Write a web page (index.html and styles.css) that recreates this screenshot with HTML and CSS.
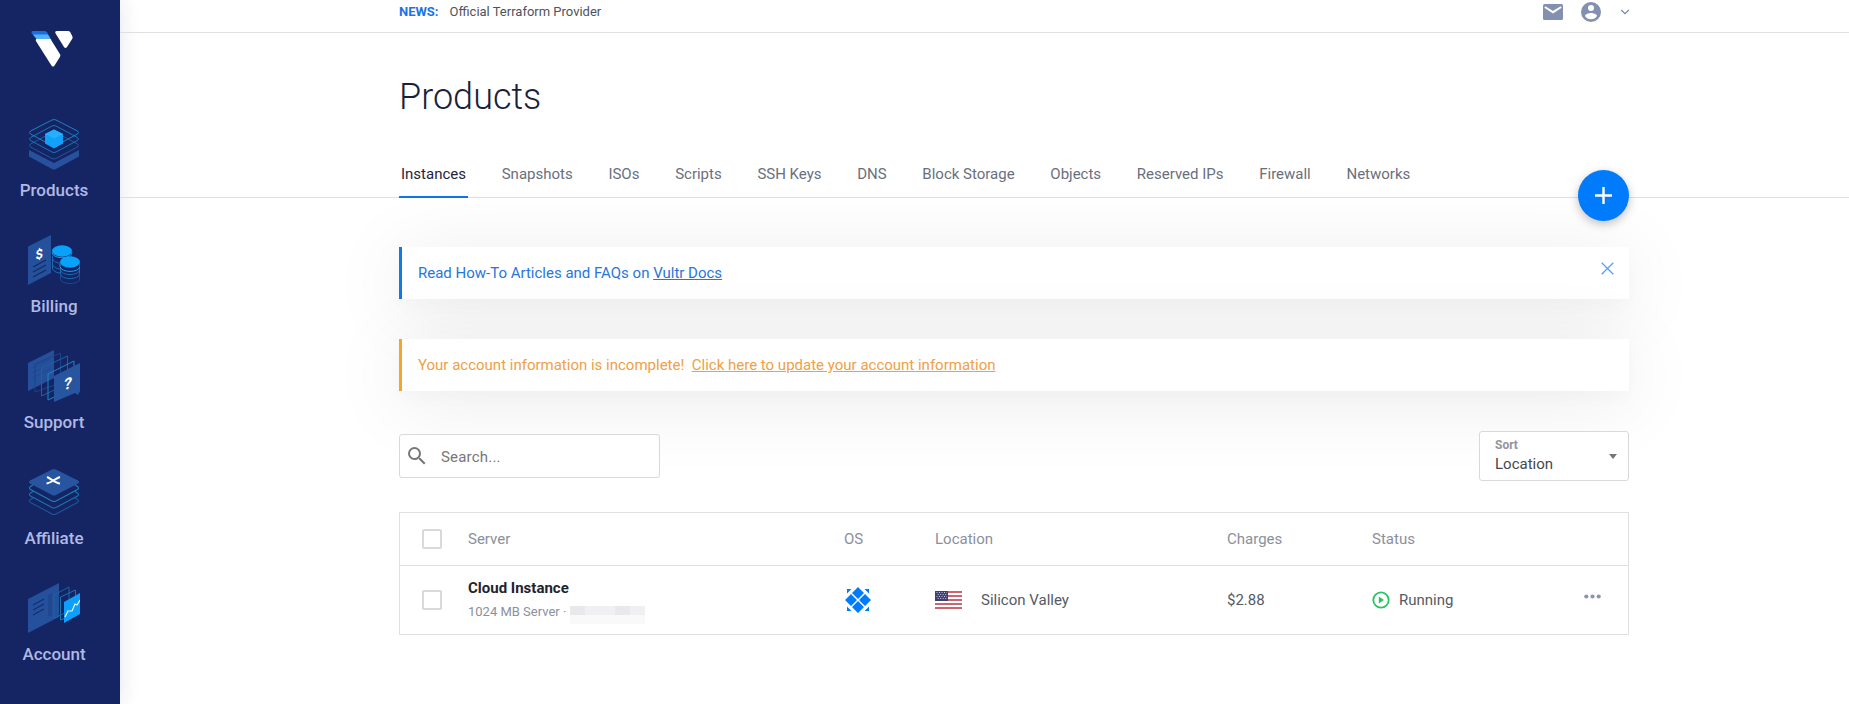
FILE: index.html
```html
<!DOCTYPE html>
<html lang="en">
<head>
<meta charset="utf-8">
<title>Products</title>
<link rel="stylesheet" href="styles.css">
</head>
<body>
<div class="app">
  <aside class="sidebar">
    <svg class="logo" viewBox="0 0 44 38" width="44" height="38">
      <path d="M3 1h11.500q1.500 0 2.400 1.300L19.600 7H4.400L1.500 3Q1 1 3 1z" fill="#1a6fe0"/>
      <path d="M3.300 4.500H18l3.300 5.500H7z" fill="#51b1fb"/>
      <path d="M6.300 9H20.500L30 24.300q.7 1.200 0 2.400L24.400 35.700q-1.400 1.800-2.800 0L5.900 11Q5.500 9.500 6.300 9z" fill="#fff"/>
      <path d="M26.800 1H38q1.500 0 2.300 1.300l2 4q.7 1.200 0 2.400L37 17q-1.500 1.800-3 0L25.600 3.500Q24.500 1.200 26.800 1z" fill="#fff"/>
    </svg>
    <nav class="menu">
      <a class="menu-item">
        <svg viewBox="0 0 52 52" width="52" height="52">
          <path d="M1 32L26 45 51 32v6.500L28 51q-2 1-4 0L1 38.500z" fill="#27509d"/>
          <g fill="none" stroke="#1876b8" stroke-width="1">
            <path d="M24 14.500L2.500 26q-2 1.500 0 3L24 40.500q2 1 4 0L49.500 29q2-1.500 0-3L28 14.500q-2-1-4 0z" stroke="#1d5a9f"/>
            <path d="M24 8L2.500 19.500q-2 1.500 0 3L24 34q2 1 4 0l21.500-11.500q2-1.500 0-3L28 8q-2-1-4 0z"/>
            <path d="M24 2L2.500 13q-2 1.500 0 3L24 27.500q2 1 4 0L49.500 16q2-1.500 0-3L28 2q-2-1-4 0z" stroke="#1b83c2"/>
          </g>
          <path d="M26 11.500l9 4.500v9.500l-9 5-9-5V16z" fill="#12a0fb"/>
          <path d="M26 11.500l9 4.500-9 4.500L17 16z" fill="#25b0ff"/>
        </svg>
        <span>Products</span>
      </a>
      <a class="menu-item">
        <svg viewBox="0 0 52 52" width="52" height="52">
          <path d="M0 12.500L23 1v38L0 51z" fill="#24509c"/>
          <path d="M5 33l13-7M5 38l13-7M5 43l13-7" stroke="#142963" stroke-width="1.200"/>
          <text class="iso-mark" transform="matrix(1 -.35 0 1 7.500 26)">$</text>
          <g fill="none" stroke="#176cb3">
            <path d="M24.500 19v5c0 7 19 7 19 0v-5M24.500 25v6c2 3 5 4 8 4M24.500 30v5c2 3 5 4 8 4"/>
            <path d="M32.500 30v10c0 6 19 6 19 0V30M32.500 36c0 6 19 6 19 0"/>
            <path d="M32.500 40v5c0 6 19 6 19 0v-5" stroke="#1b4a90"/>
          </g>
          <path d="M24 17v3.500c2 7 18 7 20 0V17z" fill="#152463"/>
          <path d="M24 18.500c1 7 19 7 20 0" fill="none" stroke="#169bed"/>
          <ellipse cx="34" cy="17" rx="10" ry="5.800" fill="#08a2fb"/>
          <path d="M32 28v4.500c2 6.500 18 6.500 20 0V28z" fill="#152463"/>
          <path d="M32 29.500v3c1 6.500 19 6.500 20 0v-3" fill="none" stroke="#1a9ff0"/>
          <ellipse cx="42" cy="28" rx="10" ry="5.800" fill="#08a2fb"/>
        </svg>
        <span>Billing</span>
      </a>
      <a class="menu-item">
        <svg viewBox="0 0 52 52" width="52" height="52">
          <path d="M0 13L26 0v28L0 41z" fill="#24509c"/>
          <path d="M4 18l18-9M4 23l18-9M4 28l18-9" stroke="#20498f"/>
          <g fill="none">
            <path d="M7 14L32.500 3v30L7 42z" stroke="#1b438c"/>
            <path d="M13.500 18L39.500 6v28l-26 12z" stroke="#1b62a4"/>
            <path d="M20 24l26-13v27L20 50z" stroke="#1a86c4"/>
          </g>
          <path d="M26 26l26-13v28l-2 4-3-2L26 52z" fill="#28559f"/>
          <text class="iso-mark iso-mark--large" transform="matrix(1 -.35 -.1 1 35.500 40.500)">?</text>
        </svg>
        <span>Support</span>
      </a>
      <a class="menu-item">
        <svg viewBox="0 0 52 52" width="52" height="52">
          <g fill="none" stroke-width="1.100">
            <path d="M5 32l-2.500 1.500q-2 1.500 0 3L24 48q2 1 4 0l21.500-11.500q2-1.500 0-3L47 32" stroke="#1c5799"/>
            <path d="M5 25.500L2.500 27q-2 1.500 0 3L24 41.500q2 1 4 0L49.500 30q2-1.500 0-3L47 25.500" stroke="#1a73ae"/>
            <path d="M5 19l-2.500 1.500q-2 1.500 0 3L24 35q2 1 4 0l21.500-11.500q2-1.500 0-3L47 19" stroke="#1b83ba"/>
          </g>
          <path d="M24 3.500L2 14.500q-2 1.500 0 3L24 29q2 1 4 0l22-11.500q2-1.500 0-3L28 3.500q-2-1-4 0z" fill="#28559f"/>
          <path d="M19 11c3 1 8 6 13 6.500M32 11c-4 1-9 6-13.500 6.500" fill="none" stroke="#fff" stroke-width="2"/>
        </svg>
        <span>Affiliate</span>
      </a>
      <a class="menu-item">
        <svg viewBox="0 0 52 52" width="52" height="52">
          <path d="M0 17L31 1v34L0 51z" fill="#24509c"/>
          <path d="M5 23l11-6M5 28l11-6M5 33l11-6" stroke="#152e72" stroke-width="1.200"/>
          <path d="M20 13l4-2v22l-4 2z" fill="#1f488f"/>
          <g fill="none">
            <path d="M26 13l15-8v24l-15 7z" stroke="#1b62a4"/>
            <path d="M32.500 15L47.500 8v24l-15 6z" stroke="#1b74b2"/>
          </g>
          <path d="M36 20l16-9v21l-16 9z" fill="#0d9ffb"/>
          <path d="M37 35l3-6 4 0 3-7 2 1 3-5" fill="none" stroke="#dff5ff" stroke-width="1.200"/>
        </svg>
        <span>Account</span>
      </a>
    </nav>
  </aside>
  <main class="main">
    <header class="topbar">
      <div class="container topbar-row">
        <b class="news-label">NEWS:</b>
        <span class="news-text">Official Terraform Provider</span>
        <div class="topbar-icons">
          <svg viewBox="0 0 20 16" width="20" height="16"><rect width="20" height="16" rx="1.500" fill="#8490b0"/><path d="M1.800 3L10 8.200 18.200 3" fill="none" stroke="#fff" stroke-width="2"/></svg>
          <svg viewBox="2 2 20 20" width="20" height="20"><path fill="#8490b0" d="M12 2a10 10 0 1 0 0 20 10 10 0 0 0 0-20zm0 3a3 3 0 1 1 0 6 3 3 0 0 1 0-6zm0 14.200a7.200 7.200 0 0 1-6-3.220c.03-1.990 4-3.080 6-3.080s5.970 1.090 6 3.080a7.200 7.200 0 0 1-6 3.220z"/></svg>
          <svg class="caret" viewBox="0 0 10 6" width="10" height="6"><path d="M1.200 1L5 4.600 8.800 1" fill="none" stroke="#7b87a5" stroke-width="1.200"/></svg>
        </div>
      </div>
    </header>
    <section class="heading">
      <div class="container heading-inner">
        <h1>Products</h1>
        <nav class="tabs">
          <a class="tab tab--active">Instances</a><a class="tab">Snapshots</a><a class="tab">ISOs</a><a class="tab">Scripts</a><a class="tab">SSH Keys</a><a class="tab">DNS</a><a class="tab">Block Storage</a><a class="tab">Objects</a><a class="tab">Reserved IPs</a><a class="tab">Firewall</a><a class="tab">Networks</a>
        </nav>
        <button class="add" aria-label="Add"><svg viewBox="0 0 17 17" width="17" height="17"><path d="M8.500 0v17M0 8.500h17" stroke="#fff" stroke-width="2.400"/></svg></button>
      </div>
    </section>
    <div class="container">
      <div class="alert alert--info"><p>Read How-To Articles and FAQs on <a>Vultr Docs</a></p>
        <svg class="close" viewBox="0 0 13 13" width="13" height="13"><path d="M.7.700l11.600 11.600M12.300.700L.700 12.300" stroke="#5c9ff0" stroke-width="1.300"/></svg>
      </div>
      <div class="alert alert--warn"><p>Your account information is incomplete!&nbsp; <a>Click here to update your account information</a></p></div>
      <div class="filters">
        <label class="search">
          <svg viewBox="3 3 18 18" width="18" height="18"><path fill="#777" d="M15.500 14h-.79l-.28-.27A6.470 6.470 0 0 0 16 9.500 6.500 6.500 0 1 0 9.500 16c1.610 0 3.090-.59 4.230-1.570l.27.28v.79l5 4.990L20.490 19l-4.990-5zm-6 0C7.010 14 5 11.990 5 9.500S7.010 5 9.500 5 14 7.010 14 9.500 11.990 14 9.500 14z"/></svg>
          <span>Search...</span>
        </label>
        <div class="sort"><div class="sort-text"><b>Sort</b><span>Location</span></div><i class="sort-arrow"></i></div>
      </div>
      <div class="table">
        <div class="row row--head">
          <i class="check"></i><span>Server</span><span>OS</span><span>Location</span><span>Charges</span><span>Status</span><span></span>
        </div>
        <div class="row">
          <i class="check"></i>
          <div class="server"><b>Cloud Instance</b><div class="server-meta">1024 MB Server · <i class="redacted"><i></i><i></i><i></i><i></i></i></div></div>
          <svg class="os" viewBox="0 0 26 26" width="26" height="26" fill="#007bfc">
            <path d="M13 0l6 6-6 6-6-6zM13 14l6 6-6 6-6-6zM6 7l6 6-6 6-6-6zM20 7l6 6-6 6-6-6z"/>
            <path d="M2 2h4.500L2 6.500zM24 2v4.500L19.500 2zM2 24v-4.500L6.500 24zM24 24h-4.500l4.500-4.500z"/>
          </svg>
          <div class="location">
            <svg viewBox="0 0 27 18" width="27" height="18">
              <path fill="#fff" d="M0 0h27v18H0z"/>
              <path stroke="#ca6571" stroke-width="2" d="M0 1h27M0 5h27M0 9h27M0 13h27M0 17h27"/>
              <path fill="#3e3f72" d="M0 0h13v10H0z"/>
              <path stroke="#c9c9dc" stroke-width="1" stroke-dasharray="1 1.500" d="M1.500 1.500h10.500M2.700 3.500h8.500M1.500 5.500h10.500M2.700 7.500h8.500"/>
            </svg>
            <span>Silicon Valley</span>
          </div>
          <span>$2.88</span>
          <div class="status">
            <svg viewBox="0 0 18 18" width="18" height="18"><circle cx="9" cy="9" r="7.700" fill="none" stroke="#27c464" stroke-width="1.800"/><path d="M6.800 5.400L12 9l-5.200 3.600z" fill="#27c464"/></svg>
            <span>Running</span>
          </div>
          <svg class="more" viewBox="0 0 17 5" width="17" height="5" fill="#8b93b3"><circle cx="2.300" cy="2.500" r="2.100"/><circle cx="8.500" cy="2.500" r="2.100"/><circle cx="14.700" cy="2.500" r="2.100"/></svg>
        </div>
      </div>
    </div>
  </main>
</div>
</body>
</html>
```
FILE: styles.css
```css
* { box-sizing: border-box; }
body { margin: 0; height: 704px; overflow: hidden; background: #fff; font-family: Roboto, "Liberation Sans", sans-serif; font-size: 15px; color: #555b66; }
h1, p { margin: 0; }
i { font-style: normal; }
.app { display: flex; height: 704px; }

.sidebar { flex: 0 0 120px; padding: 30px 12px 0 0; background: #152463; box-shadow: 0 0 20px rgba(20, 30, 90, .12); display: flex; flex-direction: column; align-items: center; }
.logo { margin-left: -5px; }
.menu { display: flex; flex-direction: column; padding-top: 50px; width: 100%; }
.menu-item { display: flex; flex-direction: column; align-items: center; gap: 10px; height: 116px; color: #b0b9e4; font-size: 17px; font-weight: 500; line-height: 20px; }
.iso-mark { font-weight: 700; font-size: 13px; fill: #fff; }
.iso-mark--large { font-size: 16px; }

.main { flex: 1; min-width: 0; }
.container { width: 1230px; margin-left: 279px; }
.topbar { height: 33px; border-bottom: 1px solid #dfe0e2; }
.topbar-row { display: flex; align-items: center; height: 24px; font-size: 13px; line-height: 16px; }
.news-label { color: #1a73e8; margin-right: 11px; }
.news-text { color: #50535a; }
.topbar-icons { display: flex; align-items: center; gap: 18px; margin-left: auto; }
.caret { margin-left: 1px; margin-right: -1px; }

.heading { height: 165px; border-bottom: 1px solid #dfe0e2; }
.heading-inner { position: relative; height: 165px; display: flex; flex-direction: column; justify-content: space-between; }
h1 { padding-top: 42px; font-size: 36px; font-weight: 300; line-height: 44px; color: #1b1f3a; }
.tabs { display: flex; gap: 31.700px; }
.tab { padding: 11px 2px 0; height: 45px; line-height: 20px; white-space: nowrap; color: #6a6f7d; border-bottom: 2px solid transparent; }
.tab--active { color: #1f2440; border-color: #1173e6; }
.add { position: absolute; right: 0; bottom: -23px; width: 51px; height: 51px; padding: 0; border: 0; border-radius: 50%; background: #007bfc; box-shadow: 0 3px 10px rgba(0, 0, 0, .25); display: grid; place-items: center; }

.alert { display: flex; justify-content: space-between; height: 52px; padding: 16px 15.500px 0 16px; line-height: 20px; background: #fff; border-left: 3px solid; box-shadow: 0 10px 80px rgba(0, 0, 0, .09), 0 8px 16px rgba(0, 0, 0, .02); }
.alert a { text-decoration: underline; }
.alert--info { margin-top: 49px; border-color: #0f7bea; color: #2876dc; }
.alert--warn { margin-top: 40px; color: #f0a045; border-color: #f5a52a; }
.close { margin-top: -1px; }

.filters { display: flex; justify-content: space-between; align-items: center; height: 50px; margin-top: 40px; }
.search { display: flex; align-items: center; gap: 15px; width: 261px; height: 44px; padding-left: 8px; border: 1px solid #d9d9d9; border-radius: 3px; background: #fff; color: #777; }
.search span { padding-top: 1px; letter-spacing: .2px; }
.sort { display: flex; align-items: center; justify-content: space-between; width: 150px; height: 50px; padding: 0 11px 0 15px; border: 1px solid #d9d9d9; border-radius: 3px; background: #fff; color: #45484e; }
.sort-text { display: flex; flex-direction: column; line-height: 19px; padding-bottom: 2px; }
.sort-text b { font-size: 12px; font-weight: 700; color: #92959c; }
.sort-arrow { border: 4px solid transparent; border-top: 5px solid #777; border-bottom: 0; }

.table { margin-top: 31px; border: 1px solid #dfe0e2; background: #fff; }
.row { display: grid; grid-template-columns: 46px 376px 91px 292px 145px 211px 1fr; align-items: center; height: 68px; padding-left: 22px; }
.row--head { height: 53px; border-bottom: 1px solid #dfe0e2; color: #8b909c; }
.check { width: 20px; height: 20px; border: 2px solid #d9d9db; border-radius: 2px; }
.server { padding-bottom: 2px; }
.server b { display: block; font-weight: 700; line-height: 24px; color: #1f2430; letter-spacing: 0; }
.server-meta { display: flex; align-items: center; height: 23px; font-size: 13px; line-height: 23px; color: #8b909c; white-space: pre; }
.redacted { display: flex; margin-top: -2px; }
.redacted i { width: 15px; height: 9px; background: #e9e9eb; box-shadow: 0 9px #f9f9fa; }
.redacted i:nth-child(2) { width: 30px; background: #f0f0f2; }
.redacted i:nth-child(4) { background: #f0f0f2; }
.os { margin-left: 1px; }
.location { display: flex; align-items: center; gap: 19px; }
.status { display: flex; align-items: center; gap: 9px; }
.more { margin-top: -8px; margin-left: .500px; }
```
